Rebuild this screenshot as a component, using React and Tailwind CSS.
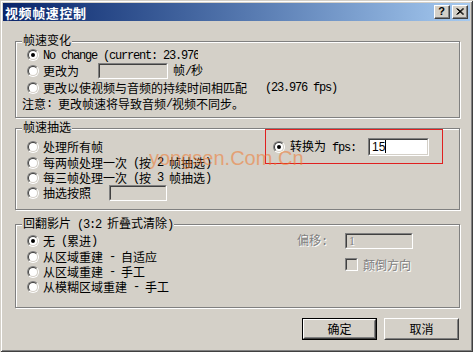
import React from "react";

const M = ({ children }) => (
  <span className="font-['Liberation_Mono',monospace] text-[12px] tracking-[-1.2px] whitespace-pre">{children}</span>
);

function Radio({ checked }) {
  return (
    <span className="w-[12px] h-[12px] shrink-0 rounded-full border border-t-[#808080] border-l-[#808080] border-b-white border-r-white flex">
      <span className="flex-1 rounded-full border border-t-[#404040] border-l-[#404040] border-b-[#d4d0c8] border-r-[#d4d0c8] bg-white flex items-center justify-center">
        {checked && <span className="w-[4px] h-[4px] rounded-full bg-black" />}
      </span>
    </span>
  );
}

function Sunken({ className = "", inner = "bg-[#d4d0c8]", children }) {
  return (
    <span className={`flex border border-t-[#808080] border-l-[#808080] border-b-white border-r-white ${className}`}>
      <span className={`flex-1 flex items-center border border-t-[#404040] border-l-[#404040] border-b-[#d4d0c8] border-r-[#d4d0c8] ${inner}`}>
        {children}
      </span>
    </span>
  );
}

function Group({ label, className = "", children }) {
  return (
    <div className={`relative border border-[#808080] shadow-[1px_1px_0_#fff,inset_1px_1px_0_#fff] ${className}`}>
      <span className="absolute left-[6px] top-[-9px] px-[1px] bg-[#d4d0c8] leading-[14px] whitespace-pre">{label}</span>
      {children}
    </div>
  );
}

function Row({ h = "h-[16px]", checked, children }) {
  return (
    <div className={`flex items-center ${h}`}>
      <Radio checked={checked} />
      <span className="ml-[4px] flex items-center whitespace-pre">{children}</span>
    </div>
  );
}

function Btn({ children, def }) {
  const body = (
    <span className="flex-1 flex border border-t-white border-l-white border-b-[#404040] border-r-[#404040]">
      <span className="flex-1 flex items-center justify-center border border-t-[#d4d0c8] border-l-[#d4d0c8] border-b-[#808080] border-r-[#808080]">
        {children}
      </span>
    </span>
  );
  return (
    <div className={`w-[75px] h-[22px] flex ${def ? "border border-black" : ""}`}>{body}</div>
  );
}

function CapBtn({ children }) {
  return (
    <div className="w-[16px] h-[14px] flex bg-[#d4d0c8] border border-t-white border-l-white border-b-[#404040] border-r-[#404040]">
      <span className="flex-1 flex items-center justify-center border-b border-r border-[#808080] text-black">{children}</span>
    </div>
  );
}

const dis = "text-[#808080] [text-shadow:1px_1px_0_#fff]";

export default function App() {
  return (
    <div className="relative w-[473px] h-[352px] overflow-hidden bg-[#d4d0c8] p-[3px] text-[12px] leading-none text-black font-['Noto_Sans_CJK_SC',sans-serif] shadow-[inset_1px_1px_0_#d4d0c8,inset_-1px_-1px_0_#404040,inset_2px_2px_0_#fff,inset_-2px_-2px_0_#808080]">
      {/* title bar */}
      <div className="h-[18px] flex items-center justify-between pl-[2px] pr-[2px] bg-gradient-to-r from-[#0a246a] to-[#a6caf0]">
        <span className="text-white font-bold text-[13px] tracking-[0.6px]">视频帧速控制</span>
        <div className="flex gap-[2px]">
          <CapBtn><span className="font-['Liberation_Sans',sans-serif] font-bold text-[11px] leading-none">?</span></CapBtn>
          <CapBtn>
            <svg width="8" height="7" viewBox="0 0 8 7"><path d="M0.5 0.5 L7 6.5 M1.5 0.5 L8 6.5 M7 0.5 L0.5 6.5 M8 0.5 L1.5 6.5" stroke="#000" strokeWidth="1" /></svg>
          </CapBtn>
        </div>
      </div>

      <div className="pl-[12px] pr-[10px]">
        <Group label="帧速变化" className="mt-[20px] h-[77px]">
          <div className="pl-[11px] pt-[5px] flex flex-col">
            <Row checked>
              <span className="w-[155px] overflow-hidden"><M>No change (current: 23.976 fps)</M></span>
            </Row>
            <Row>
              <span className="w-[55px]">更改为</span>
              <Sunken className="w-[70px] h-[16px]" />
              <span className="ml-[5px]">帧<M>/</M>秒</span>
            </Row>
            <Row h="h-[18px]">
              更改以使视频与音频的持续时间相匹配<M>   (23.976 fps)</M>
            </Row>
            <div className="h-[14px] flex items-center ml-[-5px] whitespace-pre">
              注意<M>: </M>更改帧速将导致音频<M>/</M>视频不同步。
            </div>
          </div>
        </Group>

        <Group label="帧速抽选" className="mt-[10px] h-[82px] flex">
          <div className="w-[249px] shrink-0 pl-[11px] pt-[10px] flex flex-col">
            <Row>处理所有帧</Row>
            <Row h="h-[15px]">每两帧处理一次<M> (</M>按<M> 2 </M>帧抽选<M>)</M></Row>
            <Row h="h-[15px]">每三帧处理一次<M> (</M>按<M> 3 </M>帧抽选<M>)</M></Row>
            <Row>
              <span className="w-[66px]">抽选按照</span>
              <Sunken className="w-[58px] h-[16px]" />
            </Row>
          </div>
          <div className="w-[178px] h-[35px] border border-[#e02020] flex items-center pl-[7px]">
            <Radio checked />
            <span className="ml-[5px] w-[78px] whitespace-pre">转换为<M> fps:</M></span>
            <Sunken className="w-[61px] h-[18px]" inner="bg-white">
              <span className="ml-[2px] font-['Liberation_Sans',sans-serif] text-[12px]">15</span>
              <span className="w-[1px] h-[13px] bg-black" />
            </Sunken>
          </div>
        </Group>

        <Group label={<>回翻影片<M> (3:2 </M>折叠式清除<M>)</M></>} className="mt-[14px] h-[84px] flex">
          <div className="w-[281px] shrink-0 pl-[11px] pt-[8px] flex flex-col">
            <Row checked>无<M> (</M>累进<M>)</M></Row>
            <Row h="h-[15px]">从区域重建<M> - </M>自适应</Row>
            <Row h="h-[15px]">从区域重建<M> - </M>手工</Row>
            <Row h="h-[15px]">从模糊区域重建<M> - </M>手工</Row>
          </div>
          <div className="pt-[8px] flex flex-col">
            <div className="h-[16px] flex items-center">
              <span className={`w-[48px] ${dis}`}>偏移<M>:</M></span>
              <Sunken className="w-[68px] h-[16px]">
                <span className={`ml-[2px] font-['Liberation_Serif',serif] text-[12px] ${dis}`}>1</span>
              </Sunken>
            </div>
            <div className="mt-[9px] h-[13px] flex items-center ml-[48px]">
              <Sunken className="w-[13px] h-[13px]" />
              <span className={`ml-[5px] ${dis}`}>颠倒方向</span>
            </div>
          </div>
        </Group>

        <div className="mt-[10px] pr-[1px] flex justify-end gap-[7px]">
          <Btn def>确定</Btn>
          <Btn>取消</Btn>
        </div>
      </div>

      {/* watermark */}
      <span className="absolute left-[149px] top-[148px] text-[20px] leading-none font-['Liberation_Sans',sans-serif] text-[#f07a30] opacity-55 pointer-events-none whitespace-nowrap">
        yongsen.Com.Cn
      </span>
    </div>
  );
}
